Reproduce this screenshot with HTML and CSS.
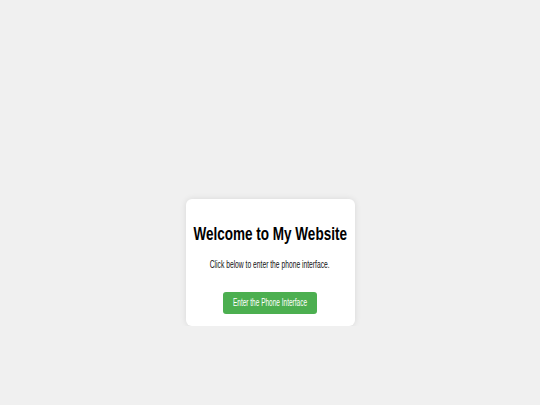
FILE: index.html
```html
<!DOCTYPE html>
<html lang="en">
<head>
<meta charset="utf-8">
<title>Welcome</title>
<link rel="stylesheet" href="styles.css">
</head>
<body>
<main class="page">
  <section class="card">
    <h1 class="title"><span class="squeeze title-text">Welcome to My Website</span></h1>
    <p class="lead"><span class="squeeze lead-text">Click below to enter the phone interface.</span></p>
    <button class="enter-btn" type="button"><span class="squeeze btn-text">Enter the Phone Interface</span></button>
  </section>
</main>
</body>
</html>
```

FILE: styles.css
```css
html, body {
  margin: 0;
  padding: 0;
  background: #f0f0f0;
  font-family: "Liberation Sans", Arial, sans-serif;
}

.page {
  display: flex;
  justify-content: center;
  padding-top: 199px;
}

.card {
  width: 169px;
  box-sizing: border-box;
  background: #ffffff;
  border-radius: 6px;
  box-shadow: 0 0 6px rgba(0, 0, 0, 0.1);
  padding: 25px 0 12px;
  display: flex;
  flex-direction: column;
  align-items: center;
}

.title,
.lead {
  display: flex;
  justify-content: center;
  width: 100%;
  white-space: nowrap;
  margin: 0;
}

.squeeze {
  display: inline-block;
  transform-origin: center;
}

.title {
  font-size: 18px;
  line-height: 21.6px;
  font-weight: 700;
  color: #000;
}

.title-text {
  transform: scaleX(0.751);
}

.lead {
  margin-top: 12px;
  font-size: 10.5px;
  line-height: 12.6px;
  color: #111;
}

.lead-text {
  transform: scaleX(0.64);
}

.enter-btn {
  margin-top: 22px;
  width: 94px;
  height: 22px;
  padding: 0;
  border: none;
  border-radius: 3px;
  background: #4caf50;
  color: #fff;
  font-family: "Liberation Sans", Arial, sans-serif;
  font-size: 10px;
  line-height: 22px;
  display: flex;
  justify-content: center;
  white-space: nowrap;
  overflow: visible;
}

.btn-text {
  transform: scaleX(0.65);
}
```
